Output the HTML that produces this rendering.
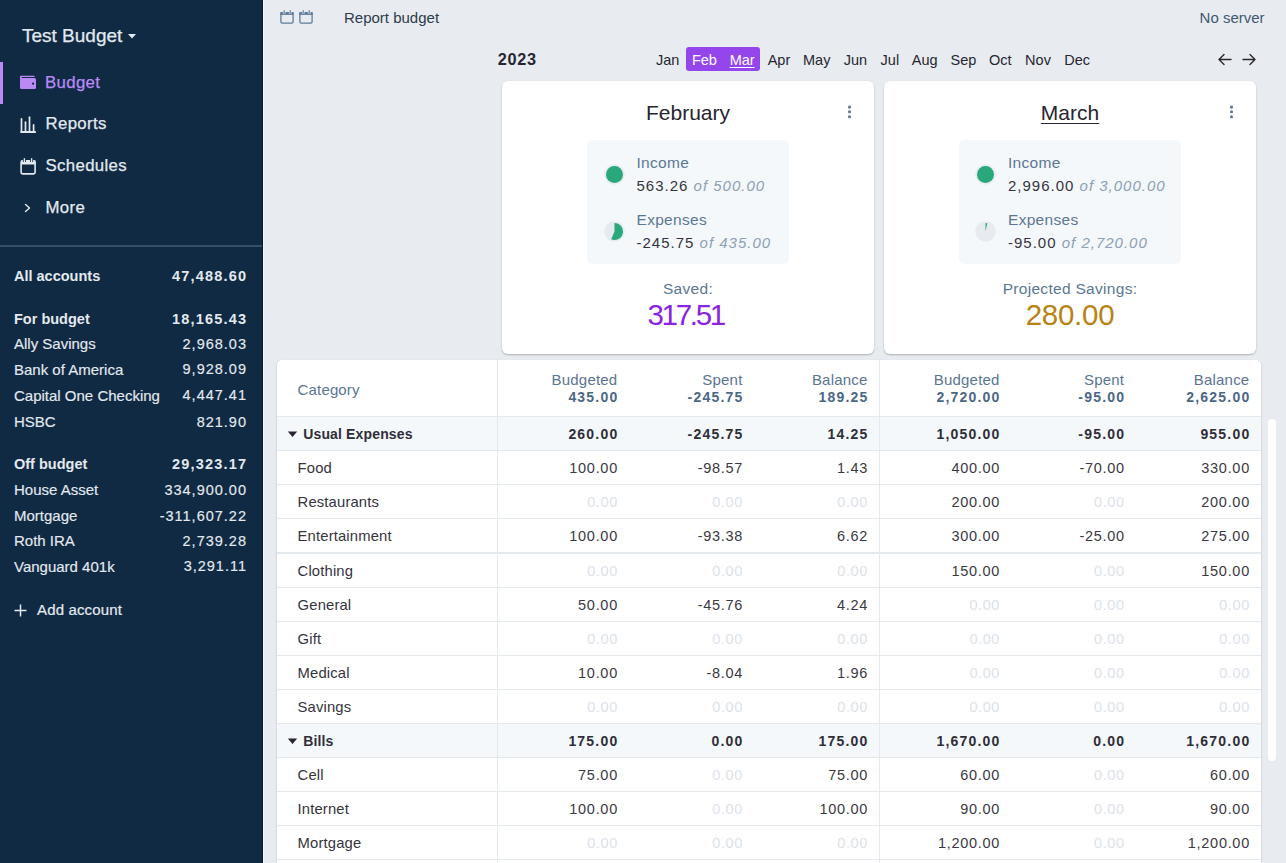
<!DOCTYPE html>
<html><head><meta charset="utf-8"><title>Budget</title>
<style>
html,body{margin:0;padding:0;}
body{width:1286px;height:863px;overflow:hidden;position:relative;background:#e8ecf0;font-family:"Liberation Sans", sans-serif;}
.t{position:absolute;white-space:nowrap;}
</style></head><body>
<div style="position:absolute;left:0px;top:0px;width:263px;height:863px;background:#102a43;"></div>
<div style="position:absolute;left:262px;top:0px;width:1px;height:863px;background:#03182f;"></div>
<div style="position:absolute;left:263px;top:0px;width:1px;height:863px;background:#f3f6f9;"></div>
<div class="t" style="top:26.42px;font-size:19px;line-height:19px;color:#e3e9ef;left:22px;-webkit-text-stroke:0.25px #e3e9ef;">Test Budget</div>
<svg style="position:absolute;left:127px;top:33px" width="10" height="7" viewBox="0 0 10 7"><path d="M1 1 L9 1 L5 5.5 Z" fill="#e3e9ef"/></svg>
<div style="position:absolute;left:0px;top:62px;width:3px;height:42px;background:#b98af6;"></div>
<svg style="position:absolute;left:20px;top:75px" width="16" height="15" viewBox="0 0 16 15"><rect x="0" y="0.7" width="14.7" height="1.4" rx="0.7" fill="#b98af6"/><rect x="0" y="2.9" width="16" height="11.2" rx="1.5" fill="#b98af6"/><rect x="0" y="1.3" width="1.6" height="3" fill="#b98af6"/><circle cx="13.1" cy="8.7" r="1.1" fill="#102a43"/></svg>
<div class="t" style="top:74.78px;font-size:16.8px;line-height:16.8px;color:#b98af6;letter-spacing:0.35px;left:45px;-webkit-text-stroke:0.25px #b98af6;">Budget</div>
<svg style="position:absolute;left:20px;top:115px" width="17" height="19" viewBox="0 0 17 19"><g stroke="#e3e9ef" stroke-width="1.7" stroke-linecap="round"><path d="M1.5 3.9 V16.5"/><path d="M5.5 7.2 V16.5"/><path d="M9.5 2.2 V16.5"/><path d="M13.6 9.9 V16.5"/></g><rect x="0.1" y="15.9" width="16" height="2.2" rx="1" fill="#e3e9ef"/></svg>
<div class="t" style="top:115.98px;font-size:16.8px;line-height:16.8px;color:#e3e9ef;letter-spacing:0.35px;left:45.5px;-webkit-text-stroke:0.25px #e3e9ef;">Reports</div>
<svg style="position:absolute;left:20px;top:157px" width="17" height="19" viewBox="0 0 17 19"><rect x="1.1" y="3.8" width="14" height="13.1" rx="1.6" fill="none" stroke="#e3e9ef" stroke-width="1.6"/><rect x="1" y="3.5" width="14.4" height="4" fill="#e3e9ef"/><path d="M4.4 1.2 V5" stroke="#102a43" stroke-width="3"/><path d="M11.6 1.2 V5" stroke="#102a43" stroke-width="3"/><path d="M4.4 1.2 V5" stroke="#e3e9ef" stroke-width="1.4"/><path d="M11.6 1.2 V5" stroke="#e3e9ef" stroke-width="1.4"/></svg>
<div class="t" style="top:158.08px;font-size:16.8px;line-height:16.8px;color:#e3e9ef;letter-spacing:0.35px;left:45.5px;-webkit-text-stroke:0.25px #e3e9ef;">Schedules</div>
<svg style="position:absolute;left:23px;top:202px" width="10" height="12" viewBox="0 0 10 12"><path d="M2.5 2.5 L6.5 6 L2.5 9.5" fill="none" stroke="#e3e9ef" stroke-width="1.4" stroke-linecap="round" stroke-linejoin="round"/></svg>
<div class="t" style="top:200.28px;font-size:16.8px;line-height:16.8px;color:#e3e9ef;letter-spacing:0.35px;left:45.5px;-webkit-text-stroke:0.25px #e3e9ef;">More</div>
<div style="position:absolute;left:0px;top:245px;width:262px;height:2px;background:#37506a;"></div>
<div class="t" style="top:268.73px;font-size:14.5px;line-height:14.5px;color:#e3e9ef;font-weight:bold;left:14px;">All accounts</div>
<div class="t" style="top:268.73px;font-size:14.5px;line-height:14.5px;color:#e3e9ef;font-weight:bold;letter-spacing:1.2px;right:1038.8px;text-align:right;">47,488.60</div>
<div class="t" style="top:311.73px;font-size:14.5px;line-height:14.5px;color:#e3e9ef;font-weight:bold;left:14px;">For budget</div>
<div class="t" style="top:311.73px;font-size:14.5px;line-height:14.5px;color:#e3e9ef;font-weight:bold;letter-spacing:1.2px;right:1038.8px;text-align:right;">18,165.43</div>
<div class="t" style="top:336.10px;font-size:15px;line-height:15px;color:#e3e9ef;left:14px;-webkit-text-stroke:0.15px #e3e9ef;">Ally Savings</div>
<div class="t" style="top:336.53px;font-size:14.5px;line-height:14.5px;color:#e3e9ef;letter-spacing:1.0px;right:1039.0px;text-align:right;-webkit-text-stroke:0.15px #e3e9ef;">2,968.03</div>
<div class="t" style="top:361.90px;font-size:15px;line-height:15px;color:#e3e9ef;left:14px;-webkit-text-stroke:0.15px #e3e9ef;">Bank of America</div>
<div class="t" style="top:362.33px;font-size:14.5px;line-height:14.5px;color:#e3e9ef;letter-spacing:1.0px;right:1039.0px;text-align:right;-webkit-text-stroke:0.15px #e3e9ef;">9,928.09</div>
<div class="t" style="top:387.80px;font-size:15px;line-height:15px;color:#e3e9ef;left:14px;-webkit-text-stroke:0.15px #e3e9ef;">Capital One Checking</div>
<div class="t" style="top:388.23px;font-size:14.5px;line-height:14.5px;color:#e3e9ef;letter-spacing:1.0px;right:1039.0px;text-align:right;-webkit-text-stroke:0.15px #e3e9ef;">4,447.41</div>
<div class="t" style="top:414.10px;font-size:15px;line-height:15px;color:#e3e9ef;left:14px;-webkit-text-stroke:0.15px #e3e9ef;">HSBC</div>
<div class="t" style="top:414.53px;font-size:14.5px;line-height:14.5px;color:#e3e9ef;letter-spacing:1.0px;right:1039.0px;text-align:right;-webkit-text-stroke:0.15px #e3e9ef;">821.90</div>
<div class="t" style="top:456.93px;font-size:14.5px;line-height:14.5px;color:#e3e9ef;font-weight:bold;left:14px;">Off budget</div>
<div class="t" style="top:456.93px;font-size:14.5px;line-height:14.5px;color:#e3e9ef;font-weight:bold;letter-spacing:1.2px;right:1038.8px;text-align:right;">29,323.17</div>
<div class="t" style="top:482.20px;font-size:15px;line-height:15px;color:#e3e9ef;left:14px;-webkit-text-stroke:0.15px #e3e9ef;">House Asset</div>
<div class="t" style="top:482.63px;font-size:14.5px;line-height:14.5px;color:#e3e9ef;letter-spacing:1.0px;right:1039.0px;text-align:right;-webkit-text-stroke:0.15px #e3e9ef;">334,900.00</div>
<div class="t" style="top:508.30px;font-size:15px;line-height:15px;color:#e3e9ef;left:14px;-webkit-text-stroke:0.15px #e3e9ef;">Mortgage</div>
<div class="t" style="top:508.73px;font-size:14.5px;line-height:14.5px;color:#e3e9ef;letter-spacing:1.0px;right:1039.0px;text-align:right;-webkit-text-stroke:0.15px #e3e9ef;">-311,607.22</div>
<div class="t" style="top:533.30px;font-size:15px;line-height:15px;color:#e3e9ef;left:14px;-webkit-text-stroke:0.15px #e3e9ef;">Roth IRA</div>
<div class="t" style="top:533.73px;font-size:14.5px;line-height:14.5px;color:#e3e9ef;letter-spacing:1.0px;right:1039.0px;text-align:right;-webkit-text-stroke:0.15px #e3e9ef;">2,739.28</div>
<div class="t" style="top:559.00px;font-size:15px;line-height:15px;color:#e3e9ef;left:14px;-webkit-text-stroke:0.15px #e3e9ef;">Vanguard 401k</div>
<div class="t" style="top:559.43px;font-size:14.5px;line-height:14.5px;color:#e3e9ef;letter-spacing:1.0px;right:1039.0px;text-align:right;-webkit-text-stroke:0.15px #e3e9ef;">3,291.11</div>
<svg style="position:absolute;left:13px;top:603px" width="15" height="15" viewBox="0 0 15 15"><path d="M7.5 1.5 V13.5 M1.5 7.5 H13.5" stroke="#e3e9ef" stroke-width="1.5"/></svg>
<div class="t" style="top:602.30px;font-size:15px;line-height:15px;color:#e3e9ef;letter-spacing:0.15px;left:37px;-webkit-text-stroke:0.2px #e3e9ef;">Add account</div>
<svg style="position:absolute;left:280px;top:10px" width="14" height="14" viewBox="0 0 14 14"><rect x="0.9" y="2.65" width="12.2" height="10.5" rx="1.4" fill="none" stroke="#5f7b9a" stroke-width="1.3"/><rect x="0.3" y="2.1" width="13.4" height="2.8" fill="#5f7b9a"/><path d="M4.2 0.2 V3.8" stroke="#e8ecf0" stroke-width="2.6"/><path d="M10.2 0.2 V3.8" stroke="#e8ecf0" stroke-width="2.6"/><path d="M4.2 0.3 V3.8" stroke="#5f7b9a" stroke-width="1.2"/><path d="M10.2 0.3 V3.8" stroke="#5f7b9a" stroke-width="1.2"/></svg>
<svg style="position:absolute;left:299.4px;top:10px" width="14" height="14" viewBox="0 0 14 14"><rect x="0.9" y="2.65" width="12.2" height="10.5" rx="1.4" fill="none" stroke="#5f7b9a" stroke-width="1.3"/><rect x="0.3" y="2.1" width="13.4" height="2.8" fill="#5f7b9a"/><path d="M4.2 0.2 V3.8" stroke="#e8ecf0" stroke-width="2.6"/><path d="M10.2 0.2 V3.8" stroke="#e8ecf0" stroke-width="2.6"/><path d="M4.2 0.3 V3.8" stroke="#5f7b9a" stroke-width="1.2"/><path d="M10.2 0.3 V3.8" stroke="#5f7b9a" stroke-width="1.2"/></svg>
<div class="t" style="top:10.10px;font-size:15px;line-height:15px;color:#2e3b4a;left:344px;">Report budget</div>
<div class="t" style="top:10.00px;font-size:15px;line-height:15px;color:#3f5872;right:21.40000000000009px;text-align:right;">No server</div>
<div class="t" style="top:51.10px;font-size:16.3px;line-height:16.3px;color:#272630;font-weight:bold;letter-spacing:0.7px;left:497.7px;">2023</div>
<div style="position:absolute;left:686px;top:47px;width:74px;height:24px;background:#9446ec;border-radius:3px;"></div>
<div class="t" style="top:52.63px;font-size:14.5px;line-height:14.5px;color:#272630;left:367.6px;width:600px;text-align:center;">Jan</div>
<div class="t" style="top:52.63px;font-size:14.5px;line-height:14.5px;color:#ffffff;left:404.4px;width:600px;text-align:center;">Feb</div>
<div class="t" style="top:52.63px;font-size:14.5px;line-height:14.5px;color:#ffffff;left:442.20000000000005px;width:600px;text-align:center;text-decoration:underline;text-underline-offset:1.5px;">Mar</div>
<div class="t" style="top:52.63px;font-size:14.5px;line-height:14.5px;color:#272630;left:479px;width:600px;text-align:center;">Apr</div>
<div class="t" style="top:52.63px;font-size:14.5px;line-height:14.5px;color:#272630;left:516.7px;width:600px;text-align:center;">May</div>
<div class="t" style="top:52.63px;font-size:14.5px;line-height:14.5px;color:#272630;left:555.5px;width:600px;text-align:center;">Jun</div>
<div class="t" style="top:52.63px;font-size:14.5px;line-height:14.5px;color:#272630;left:589.9px;width:600px;text-align:center;">Jul</div>
<div class="t" style="top:52.63px;font-size:14.5px;line-height:14.5px;color:#272630;left:624.7px;width:600px;text-align:center;">Aug</div>
<div class="t" style="top:52.63px;font-size:14.5px;line-height:14.5px;color:#272630;left:663.5px;width:600px;text-align:center;">Sep</div>
<div class="t" style="top:52.63px;font-size:14.5px;line-height:14.5px;color:#272630;left:700.3px;width:600px;text-align:center;">Oct</div>
<div class="t" style="top:52.63px;font-size:14.5px;line-height:14.5px;color:#272630;left:738px;width:600px;text-align:center;">Nov</div>
<div class="t" style="top:52.63px;font-size:14.5px;line-height:14.5px;color:#272630;left:777.2px;width:600px;text-align:center;">Dec</div>
<svg style="position:absolute;left:1216px;top:52px" width="42" height="15" viewBox="0 0 42 15"><g fill="none" stroke="#272630" stroke-width="1.4" stroke-linecap="round" stroke-linejoin="round"><path d="M8 2.5 L3 7.5 L8 12.5 M3 7.5 H15"/><path d="M34 2.5 L39 7.5 L34 12.5 M39 7.5 H27"/></g></svg>
<div style="position:absolute;left:502px;top:81px;width:372px;height:273px;background:#fff;border-radius:6px;box-shadow:0 1px 2px rgba(0,0,0,0.25);"></div>
<div class="t" style="top:102.22px;font-size:21px;line-height:21px;color:#272630;left:388px;width:600px;text-align:center;">February</div>
<svg style="position:absolute;left:844px;top:100px" width="10" height="24" viewBox="0 0 10 24"><g fill="#5e7899"><circle cx="5.5" cy="7.1" r="1.55"/><circle cx="5.5" cy="11.8" r="1.55"/><circle cx="5.5" cy="16.7" r="1.55"/></g></svg>
<div style="position:absolute;left:587px;top:140px;width:202px;height:124px;background:#f5f8fb;border-radius:5px;"></div>
<svg style="position:absolute;left:603.5px;top:163.5px" width="21" height="21" viewBox="0 0 21 21"><circle cx="10.5" cy="10.5" r="10.3" fill="#e7ebef"/><circle cx="10.5" cy="10.5" r="8.5" fill="#29a87c"/></svg>
<svg style="position:absolute;left:603.5px;top:220.5px" width="21" height="21" viewBox="0 0 21 21"><circle cx="10.5" cy="10.5" r="10.3" fill="#e7ebef"/><path d="M10.5 10.5 L10.5 2.0 A8.5 8.5 0 1 1 7.179 18.324 Z" fill="#29a87c"/></svg>
<div class="t" style="top:154.88px;font-size:15.5px;line-height:15.5px;color:#5b7793;letter-spacing:0.3px;left:636.5px;">Income</div>
<div class="t" style="top:178.30px;font-size:15px;line-height:15px;color:#35343d;letter-spacing:1.0px;left:636.5px;">563.26 <i style="color:#8ca1b7">of 500.00</i></div>
<div class="t" style="top:211.68px;font-size:15.5px;line-height:15.5px;color:#5b7793;letter-spacing:0.3px;left:636.5px;">Expenses</div>
<div class="t" style="top:235.30px;font-size:15px;line-height:15px;color:#35343d;letter-spacing:1.0px;left:636.5px;">-245.75 <i style="color:#8ca1b7">of 435.00</i></div>
<div class="t" style="top:280.68px;font-size:15.5px;line-height:15.5px;color:#5b7793;letter-spacing:0.3px;left:388px;width:600px;text-align:center;">Saved:</div>
<div class="t" style="top:299.73px;font-size:29.5px;line-height:29.5px;color:#8a24e0;letter-spacing:-2.3px;left:385.70000000000005px;width:600px;text-align:center;">317.51</div>
<div style="position:absolute;left:884px;top:81px;width:372px;height:273px;background:#fff;border-radius:6px;box-shadow:0 1px 2px rgba(0,0,0,0.25);"></div>
<div class="t" style="top:102.22px;font-size:21px;line-height:21px;color:#272630;left:770px;width:600px;text-align:center;text-decoration:underline;text-underline-offset:3px;text-decoration-thickness:1px;">March</div>
<svg style="position:absolute;left:1226px;top:100px" width="10" height="24" viewBox="0 0 10 24"><g fill="#5e7899"><circle cx="5.5" cy="7.1" r="1.55"/><circle cx="5.5" cy="11.8" r="1.55"/><circle cx="5.5" cy="16.7" r="1.55"/></g></svg>
<div style="position:absolute;left:958.5px;top:140px;width:222.0px;height:124px;background:#f5f8fb;border-radius:5px;"></div>
<svg style="position:absolute;left:975.0px;top:163.5px" width="21" height="21" viewBox="0 0 21 21"><circle cx="10.5" cy="10.5" r="10.3" fill="#e7ebef"/><circle cx="10.5" cy="10.5" r="8.5" fill="#29a87c"/></svg>
<svg style="position:absolute;left:975.0px;top:220.5px" width="21" height="21" viewBox="0 0 21 21"><circle cx="10.5" cy="10.5" r="10.3" fill="#e7ebef"/><path d="M10.5 10.5 L10.5 2.0 A8.5 8.5 0 0 1 12.267 2.186 Z" fill="#29a87c"/></svg>
<div class="t" style="top:154.88px;font-size:15.5px;line-height:15.5px;color:#5b7793;letter-spacing:0.3px;left:1008.0px;">Income</div>
<div class="t" style="top:178.30px;font-size:15px;line-height:15px;color:#35343d;letter-spacing:1.0px;left:1008.0px;">2,996.00 <i style="color:#8ca1b7">of 3,000.00</i></div>
<div class="t" style="top:211.68px;font-size:15.5px;line-height:15.5px;color:#5b7793;letter-spacing:0.3px;left:1008.0px;">Expenses</div>
<div class="t" style="top:235.30px;font-size:15px;line-height:15px;color:#35343d;letter-spacing:1.0px;left:1008.0px;">-95.00 <i style="color:#8ca1b7">of 2,720.00</i></div>
<div class="t" style="top:280.68px;font-size:15.5px;line-height:15.5px;color:#5b7793;letter-spacing:0.3px;left:770px;width:600px;text-align:center;">Projected Savings:</div>
<div class="t" style="top:299.73px;font-size:29.5px;line-height:29.5px;color:#b98215;letter-spacing:-0.25px;left:770px;width:600px;text-align:center;">280.00</div>
<div style="position:absolute;left:277px;top:360px;width:984px;height:520px;background:#fff;border-radius:5px;box-shadow:0 1px 2px rgba(0,0,0,0.25);"></div>
<div style="position:absolute;left:277px;top:417px;width:984px;height:33px;background:#f5f8fb;"></div>
<div style="position:absolute;left:277px;top:724px;width:984px;height:33px;background:#f5f8fb;"></div>
<div style="position:absolute;left:277px;top:416px;width:984px;height:1px;background:#e4e9ee;"></div>
<div style="position:absolute;left:277px;top:450px;width:984px;height:1px;background:#e4e9ee;"></div>
<div style="position:absolute;left:277px;top:484px;width:984px;height:1px;background:#e4e9ee;"></div>
<div style="position:absolute;left:277px;top:518px;width:984px;height:1px;background:#e4e9ee;"></div>
<div style="position:absolute;left:277px;top:552px;width:984px;height:1px;background:#e4e9ee;"></div>
<div style="position:absolute;left:277px;top:553px;width:984px;height:1px;background:#e4e9ee;"></div>
<div style="position:absolute;left:277px;top:587px;width:984px;height:1px;background:#e4e9ee;"></div>
<div style="position:absolute;left:277px;top:621px;width:984px;height:1px;background:#e4e9ee;"></div>
<div style="position:absolute;left:277px;top:655px;width:984px;height:1px;background:#e4e9ee;"></div>
<div style="position:absolute;left:277px;top:689px;width:984px;height:1px;background:#e4e9ee;"></div>
<div style="position:absolute;left:277px;top:723px;width:984px;height:1px;background:#e4e9ee;"></div>
<div style="position:absolute;left:277px;top:757px;width:984px;height:1px;background:#e4e9ee;"></div>
<div style="position:absolute;left:277px;top:791px;width:984px;height:1px;background:#e4e9ee;"></div>
<div style="position:absolute;left:277px;top:825px;width:984px;height:1px;background:#e4e9ee;"></div>
<div style="position:absolute;left:277px;top:859px;width:984px;height:1px;background:#e4e9ee;"></div>
<div style="position:absolute;left:497px;top:360px;width:1px;height:503px;background:#e4e9ee;"></div>
<div style="position:absolute;left:879px;top:360px;width:1px;height:503px;background:#e4e9ee;"></div>
<div class="t" style="top:381.50px;font-size:15px;line-height:15px;color:#5a7592;letter-spacing:0.15px;left:297.6px;">Category</div>
<div class="t" style="top:372.30px;font-size:15px;line-height:15px;color:#5a7592;letter-spacing:0.2px;right:668.5999999999999px;text-align:right;">Budgeted</div>
<div class="t" style="top:390.15px;font-size:14px;line-height:14px;color:#4b6786;font-weight:bold;letter-spacing:1.2px;right:667.5999999999999px;text-align:right;">435.00</div>
<div class="t" style="top:372.30px;font-size:15px;line-height:15px;color:#5a7592;letter-spacing:0.2px;right:543.5px;text-align:right;">Spent</div>
<div class="t" style="top:390.15px;font-size:14px;line-height:14px;color:#4b6786;font-weight:bold;letter-spacing:1.2px;right:542.5px;text-align:right;">-245.75</div>
<div class="t" style="top:372.30px;font-size:15px;line-height:15px;color:#5a7592;letter-spacing:0.2px;right:418.50000000000006px;text-align:right;">Balance</div>
<div class="t" style="top:390.15px;font-size:14px;line-height:14px;color:#4b6786;font-weight:bold;letter-spacing:1.2px;right:417.50000000000006px;text-align:right;">189.25</div>
<div class="t" style="top:372.30px;font-size:15px;line-height:15px;color:#5a7592;letter-spacing:0.2px;right:286.40000000000003px;text-align:right;">Budgeted</div>
<div class="t" style="top:390.15px;font-size:14px;line-height:14px;color:#4b6786;font-weight:bold;letter-spacing:1.2px;right:285.40000000000003px;text-align:right;">2,720.00</div>
<div class="t" style="top:372.30px;font-size:15px;line-height:15px;color:#5a7592;letter-spacing:0.2px;right:161.8px;text-align:right;">Spent</div>
<div class="t" style="top:390.15px;font-size:14px;line-height:14px;color:#4b6786;font-weight:bold;letter-spacing:1.2px;right:160.8px;text-align:right;">-95.00</div>
<div class="t" style="top:372.30px;font-size:15px;line-height:15px;color:#5a7592;letter-spacing:0.2px;right:36.59999999999995px;text-align:right;">Balance</div>
<div class="t" style="top:390.15px;font-size:14px;line-height:14px;color:#4b6786;font-weight:bold;letter-spacing:1.2px;right:35.59999999999995px;text-align:right;">2,625.00</div>
<svg style="position:absolute;left:287px;top:431.0px" width="11" height="7" viewBox="0 0 11 7"><path d="M0.8 0.6 H10.2 L5.5 6 Z" fill="#272630"/></svg>
<div class="t" style="top:427.35px;font-size:14px;line-height:14px;color:#2f2e38;font-weight:bold;letter-spacing:0.15px;left:303.2px;">Usual Expenses</div>
<div class="t" style="top:427.35px;font-size:14px;line-height:14px;color:#2f2e38;font-weight:bold;letter-spacing:1.2px;right:667.5999999999999px;text-align:right;">260.00</div>
<div class="t" style="top:427.35px;font-size:14px;line-height:14px;color:#2f2e38;font-weight:bold;letter-spacing:1.2px;right:542.5px;text-align:right;">-245.75</div>
<div class="t" style="top:427.35px;font-size:14px;line-height:14px;color:#2f2e38;font-weight:bold;letter-spacing:1.2px;right:417.50000000000006px;text-align:right;">14.25</div>
<div class="t" style="top:427.35px;font-size:14px;line-height:14px;color:#2f2e38;font-weight:bold;letter-spacing:1.2px;right:285.40000000000003px;text-align:right;">1,050.00</div>
<div class="t" style="top:427.35px;font-size:14px;line-height:14px;color:#2f2e38;font-weight:bold;letter-spacing:1.2px;right:160.8px;text-align:right;">-95.00</div>
<div class="t" style="top:427.35px;font-size:14px;line-height:14px;color:#2f2e38;font-weight:bold;letter-spacing:1.2px;right:35.59999999999995px;text-align:right;">955.00</div>
<div class="t" style="top:461.27px;font-size:14.8px;line-height:14.8px;color:#35343d;letter-spacing:0.15px;left:297.6px;">Food</div>
<div class="t" style="top:460.73px;font-size:14.5px;line-height:14.5px;color:#3a3943;letter-spacing:0.7px;right:668.0999999999999px;text-align:right;">100.00</div>
<div class="t" style="top:460.73px;font-size:14.5px;line-height:14.5px;color:#3a3943;letter-spacing:0.7px;right:543.0px;text-align:right;">-98.57</div>
<div class="t" style="top:460.73px;font-size:14.5px;line-height:14.5px;color:#3a3943;letter-spacing:0.7px;right:418.00000000000006px;text-align:right;">1.43</div>
<div class="t" style="top:460.73px;font-size:14.5px;line-height:14.5px;color:#3a3943;letter-spacing:0.7px;right:285.90000000000003px;text-align:right;">400.00</div>
<div class="t" style="top:460.73px;font-size:14.5px;line-height:14.5px;color:#3a3943;letter-spacing:0.7px;right:161.3px;text-align:right;">-70.00</div>
<div class="t" style="top:460.73px;font-size:14.5px;line-height:14.5px;color:#3a3943;letter-spacing:0.7px;right:36.09999999999995px;text-align:right;">330.00</div>
<div class="t" style="top:495.27px;font-size:14.8px;line-height:14.8px;color:#35343d;letter-spacing:0.15px;left:297.6px;">Restaurants</div>
<div class="t" style="top:494.73px;font-size:14.5px;line-height:14.5px;color:#dce2e9;letter-spacing:0.6px;right:668.1999999999999px;text-align:right;">0.00</div>
<div class="t" style="top:494.73px;font-size:14.5px;line-height:14.5px;color:#dce2e9;letter-spacing:0.6px;right:543.1px;text-align:right;">0.00</div>
<div class="t" style="top:494.73px;font-size:14.5px;line-height:14.5px;color:#dce2e9;letter-spacing:0.6px;right:418.1px;text-align:right;">0.00</div>
<div class="t" style="top:494.73px;font-size:14.5px;line-height:14.5px;color:#3a3943;letter-spacing:0.7px;right:285.90000000000003px;text-align:right;">200.00</div>
<div class="t" style="top:494.73px;font-size:14.5px;line-height:14.5px;color:#dce2e9;letter-spacing:0.6px;right:161.4px;text-align:right;">0.00</div>
<div class="t" style="top:494.73px;font-size:14.5px;line-height:14.5px;color:#3a3943;letter-spacing:0.7px;right:36.09999999999995px;text-align:right;">200.00</div>
<div class="t" style="top:529.47px;font-size:14.8px;line-height:14.8px;color:#35343d;letter-spacing:0.15px;left:297.6px;">Entertainment</div>
<div class="t" style="top:528.93px;font-size:14.5px;line-height:14.5px;color:#3a3943;letter-spacing:0.7px;right:668.0999999999999px;text-align:right;">100.00</div>
<div class="t" style="top:528.93px;font-size:14.5px;line-height:14.5px;color:#3a3943;letter-spacing:0.7px;right:543.0px;text-align:right;">-93.38</div>
<div class="t" style="top:528.93px;font-size:14.5px;line-height:14.5px;color:#3a3943;letter-spacing:0.7px;right:418.00000000000006px;text-align:right;">6.62</div>
<div class="t" style="top:528.93px;font-size:14.5px;line-height:14.5px;color:#3a3943;letter-spacing:0.7px;right:285.90000000000003px;text-align:right;">300.00</div>
<div class="t" style="top:528.93px;font-size:14.5px;line-height:14.5px;color:#3a3943;letter-spacing:0.7px;right:161.3px;text-align:right;">-25.00</div>
<div class="t" style="top:528.93px;font-size:14.5px;line-height:14.5px;color:#3a3943;letter-spacing:0.7px;right:36.09999999999995px;text-align:right;">275.00</div>
<div class="t" style="top:564.27px;font-size:14.8px;line-height:14.8px;color:#35343d;letter-spacing:0.15px;left:297.6px;">Clothing</div>
<div class="t" style="top:563.73px;font-size:14.5px;line-height:14.5px;color:#dce2e9;letter-spacing:0.6px;right:668.1999999999999px;text-align:right;">0.00</div>
<div class="t" style="top:563.73px;font-size:14.5px;line-height:14.5px;color:#dce2e9;letter-spacing:0.6px;right:543.1px;text-align:right;">0.00</div>
<div class="t" style="top:563.73px;font-size:14.5px;line-height:14.5px;color:#dce2e9;letter-spacing:0.6px;right:418.1px;text-align:right;">0.00</div>
<div class="t" style="top:563.73px;font-size:14.5px;line-height:14.5px;color:#3a3943;letter-spacing:0.7px;right:285.90000000000003px;text-align:right;">150.00</div>
<div class="t" style="top:563.73px;font-size:14.5px;line-height:14.5px;color:#dce2e9;letter-spacing:0.6px;right:161.4px;text-align:right;">0.00</div>
<div class="t" style="top:563.73px;font-size:14.5px;line-height:14.5px;color:#3a3943;letter-spacing:0.7px;right:36.09999999999995px;text-align:right;">150.00</div>
<div class="t" style="top:598.27px;font-size:14.8px;line-height:14.8px;color:#35343d;letter-spacing:0.15px;left:297.6px;">General</div>
<div class="t" style="top:597.73px;font-size:14.5px;line-height:14.5px;color:#3a3943;letter-spacing:0.7px;right:668.0999999999999px;text-align:right;">50.00</div>
<div class="t" style="top:597.73px;font-size:14.5px;line-height:14.5px;color:#3a3943;letter-spacing:0.7px;right:543.0px;text-align:right;">-45.76</div>
<div class="t" style="top:597.73px;font-size:14.5px;line-height:14.5px;color:#3a3943;letter-spacing:0.7px;right:418.00000000000006px;text-align:right;">4.24</div>
<div class="t" style="top:597.73px;font-size:14.5px;line-height:14.5px;color:#dce2e9;letter-spacing:0.6px;right:286.0px;text-align:right;">0.00</div>
<div class="t" style="top:597.73px;font-size:14.5px;line-height:14.5px;color:#dce2e9;letter-spacing:0.6px;right:161.4px;text-align:right;">0.00</div>
<div class="t" style="top:597.73px;font-size:14.5px;line-height:14.5px;color:#dce2e9;letter-spacing:0.6px;right:36.19999999999995px;text-align:right;">0.00</div>
<div class="t" style="top:632.27px;font-size:14.8px;line-height:14.8px;color:#35343d;letter-spacing:0.15px;left:297.6px;">Gift</div>
<div class="t" style="top:631.73px;font-size:14.5px;line-height:14.5px;color:#dce2e9;letter-spacing:0.6px;right:668.1999999999999px;text-align:right;">0.00</div>
<div class="t" style="top:631.73px;font-size:14.5px;line-height:14.5px;color:#dce2e9;letter-spacing:0.6px;right:543.1px;text-align:right;">0.00</div>
<div class="t" style="top:631.73px;font-size:14.5px;line-height:14.5px;color:#dce2e9;letter-spacing:0.6px;right:418.1px;text-align:right;">0.00</div>
<div class="t" style="top:631.73px;font-size:14.5px;line-height:14.5px;color:#dce2e9;letter-spacing:0.6px;right:286.0px;text-align:right;">0.00</div>
<div class="t" style="top:631.73px;font-size:14.5px;line-height:14.5px;color:#dce2e9;letter-spacing:0.6px;right:161.4px;text-align:right;">0.00</div>
<div class="t" style="top:631.73px;font-size:14.5px;line-height:14.5px;color:#dce2e9;letter-spacing:0.6px;right:36.19999999999995px;text-align:right;">0.00</div>
<div class="t" style="top:666.27px;font-size:14.8px;line-height:14.8px;color:#35343d;letter-spacing:0.15px;left:297.6px;">Medical</div>
<div class="t" style="top:665.73px;font-size:14.5px;line-height:14.5px;color:#3a3943;letter-spacing:0.7px;right:668.0999999999999px;text-align:right;">10.00</div>
<div class="t" style="top:665.73px;font-size:14.5px;line-height:14.5px;color:#3a3943;letter-spacing:0.7px;right:543.0px;text-align:right;">-8.04</div>
<div class="t" style="top:665.73px;font-size:14.5px;line-height:14.5px;color:#3a3943;letter-spacing:0.7px;right:418.00000000000006px;text-align:right;">1.96</div>
<div class="t" style="top:665.73px;font-size:14.5px;line-height:14.5px;color:#dce2e9;letter-spacing:0.6px;right:286.0px;text-align:right;">0.00</div>
<div class="t" style="top:665.73px;font-size:14.5px;line-height:14.5px;color:#dce2e9;letter-spacing:0.6px;right:161.4px;text-align:right;">0.00</div>
<div class="t" style="top:665.73px;font-size:14.5px;line-height:14.5px;color:#dce2e9;letter-spacing:0.6px;right:36.19999999999995px;text-align:right;">0.00</div>
<div class="t" style="top:700.27px;font-size:14.8px;line-height:14.8px;color:#35343d;letter-spacing:0.15px;left:297.6px;">Savings</div>
<div class="t" style="top:699.73px;font-size:14.5px;line-height:14.5px;color:#dce2e9;letter-spacing:0.6px;right:668.1999999999999px;text-align:right;">0.00</div>
<div class="t" style="top:699.73px;font-size:14.5px;line-height:14.5px;color:#dce2e9;letter-spacing:0.6px;right:543.1px;text-align:right;">0.00</div>
<div class="t" style="top:699.73px;font-size:14.5px;line-height:14.5px;color:#dce2e9;letter-spacing:0.6px;right:418.1px;text-align:right;">0.00</div>
<div class="t" style="top:699.73px;font-size:14.5px;line-height:14.5px;color:#dce2e9;letter-spacing:0.6px;right:286.0px;text-align:right;">0.00</div>
<div class="t" style="top:699.73px;font-size:14.5px;line-height:14.5px;color:#dce2e9;letter-spacing:0.6px;right:161.4px;text-align:right;">0.00</div>
<div class="t" style="top:699.73px;font-size:14.5px;line-height:14.5px;color:#dce2e9;letter-spacing:0.6px;right:36.19999999999995px;text-align:right;">0.00</div>
<svg style="position:absolute;left:287px;top:737.8px" width="11" height="7" viewBox="0 0 11 7"><path d="M0.8 0.6 H10.2 L5.5 6 Z" fill="#272630"/></svg>
<div class="t" style="top:734.15px;font-size:14px;line-height:14px;color:#2f2e38;font-weight:bold;letter-spacing:0.15px;left:303.2px;">Bills</div>
<div class="t" style="top:734.15px;font-size:14px;line-height:14px;color:#2f2e38;font-weight:bold;letter-spacing:1.2px;right:667.5999999999999px;text-align:right;">175.00</div>
<div class="t" style="top:734.15px;font-size:14px;line-height:14px;color:#2f2e38;font-weight:bold;letter-spacing:1.2px;right:542.5px;text-align:right;">0.00</div>
<div class="t" style="top:734.15px;font-size:14px;line-height:14px;color:#2f2e38;font-weight:bold;letter-spacing:1.2px;right:417.50000000000006px;text-align:right;">175.00</div>
<div class="t" style="top:734.15px;font-size:14px;line-height:14px;color:#2f2e38;font-weight:bold;letter-spacing:1.2px;right:285.40000000000003px;text-align:right;">1,670.00</div>
<div class="t" style="top:734.15px;font-size:14px;line-height:14px;color:#2f2e38;font-weight:bold;letter-spacing:1.2px;right:160.8px;text-align:right;">0.00</div>
<div class="t" style="top:734.15px;font-size:14px;line-height:14px;color:#2f2e38;font-weight:bold;letter-spacing:1.2px;right:35.59999999999995px;text-align:right;">1,670.00</div>
<div class="t" style="top:768.27px;font-size:14.8px;line-height:14.8px;color:#35343d;letter-spacing:0.15px;left:297.6px;">Cell</div>
<div class="t" style="top:767.73px;font-size:14.5px;line-height:14.5px;color:#3a3943;letter-spacing:0.7px;right:668.0999999999999px;text-align:right;">75.00</div>
<div class="t" style="top:767.73px;font-size:14.5px;line-height:14.5px;color:#dce2e9;letter-spacing:0.6px;right:543.1px;text-align:right;">0.00</div>
<div class="t" style="top:767.73px;font-size:14.5px;line-height:14.5px;color:#3a3943;letter-spacing:0.7px;right:418.00000000000006px;text-align:right;">75.00</div>
<div class="t" style="top:767.73px;font-size:14.5px;line-height:14.5px;color:#3a3943;letter-spacing:0.7px;right:285.90000000000003px;text-align:right;">60.00</div>
<div class="t" style="top:767.73px;font-size:14.5px;line-height:14.5px;color:#dce2e9;letter-spacing:0.6px;right:161.4px;text-align:right;">0.00</div>
<div class="t" style="top:767.73px;font-size:14.5px;line-height:14.5px;color:#3a3943;letter-spacing:0.7px;right:36.09999999999995px;text-align:right;">60.00</div>
<div class="t" style="top:802.27px;font-size:14.8px;line-height:14.8px;color:#35343d;letter-spacing:0.15px;left:297.6px;">Internet</div>
<div class="t" style="top:801.73px;font-size:14.5px;line-height:14.5px;color:#3a3943;letter-spacing:0.7px;right:668.0999999999999px;text-align:right;">100.00</div>
<div class="t" style="top:801.73px;font-size:14.5px;line-height:14.5px;color:#dce2e9;letter-spacing:0.6px;right:543.1px;text-align:right;">0.00</div>
<div class="t" style="top:801.73px;font-size:14.5px;line-height:14.5px;color:#3a3943;letter-spacing:0.7px;right:418.00000000000006px;text-align:right;">100.00</div>
<div class="t" style="top:801.73px;font-size:14.5px;line-height:14.5px;color:#3a3943;letter-spacing:0.7px;right:285.90000000000003px;text-align:right;">90.00</div>
<div class="t" style="top:801.73px;font-size:14.5px;line-height:14.5px;color:#dce2e9;letter-spacing:0.6px;right:161.4px;text-align:right;">0.00</div>
<div class="t" style="top:801.73px;font-size:14.5px;line-height:14.5px;color:#3a3943;letter-spacing:0.7px;right:36.09999999999995px;text-align:right;">90.00</div>
<div class="t" style="top:836.27px;font-size:14.8px;line-height:14.8px;color:#35343d;letter-spacing:0.15px;left:297.6px;">Mortgage</div>
<div class="t" style="top:835.73px;font-size:14.5px;line-height:14.5px;color:#dce2e9;letter-spacing:0.6px;right:668.1999999999999px;text-align:right;">0.00</div>
<div class="t" style="top:835.73px;font-size:14.5px;line-height:14.5px;color:#dce2e9;letter-spacing:0.6px;right:543.1px;text-align:right;">0.00</div>
<div class="t" style="top:835.73px;font-size:14.5px;line-height:14.5px;color:#dce2e9;letter-spacing:0.6px;right:418.1px;text-align:right;">0.00</div>
<div class="t" style="top:835.73px;font-size:14.5px;line-height:14.5px;color:#3a3943;letter-spacing:0.7px;right:285.90000000000003px;text-align:right;">1,200.00</div>
<div class="t" style="top:835.73px;font-size:14.5px;line-height:14.5px;color:#dce2e9;letter-spacing:0.6px;right:161.4px;text-align:right;">0.00</div>
<div class="t" style="top:835.73px;font-size:14.5px;line-height:14.5px;color:#3a3943;letter-spacing:0.7px;right:36.09999999999995px;text-align:right;">1,200.00</div>
<div style="position:absolute;left:1268px;top:419px;width:8px;height:342px;background:#fff;border-radius:4px;"></div>
</body></html>
